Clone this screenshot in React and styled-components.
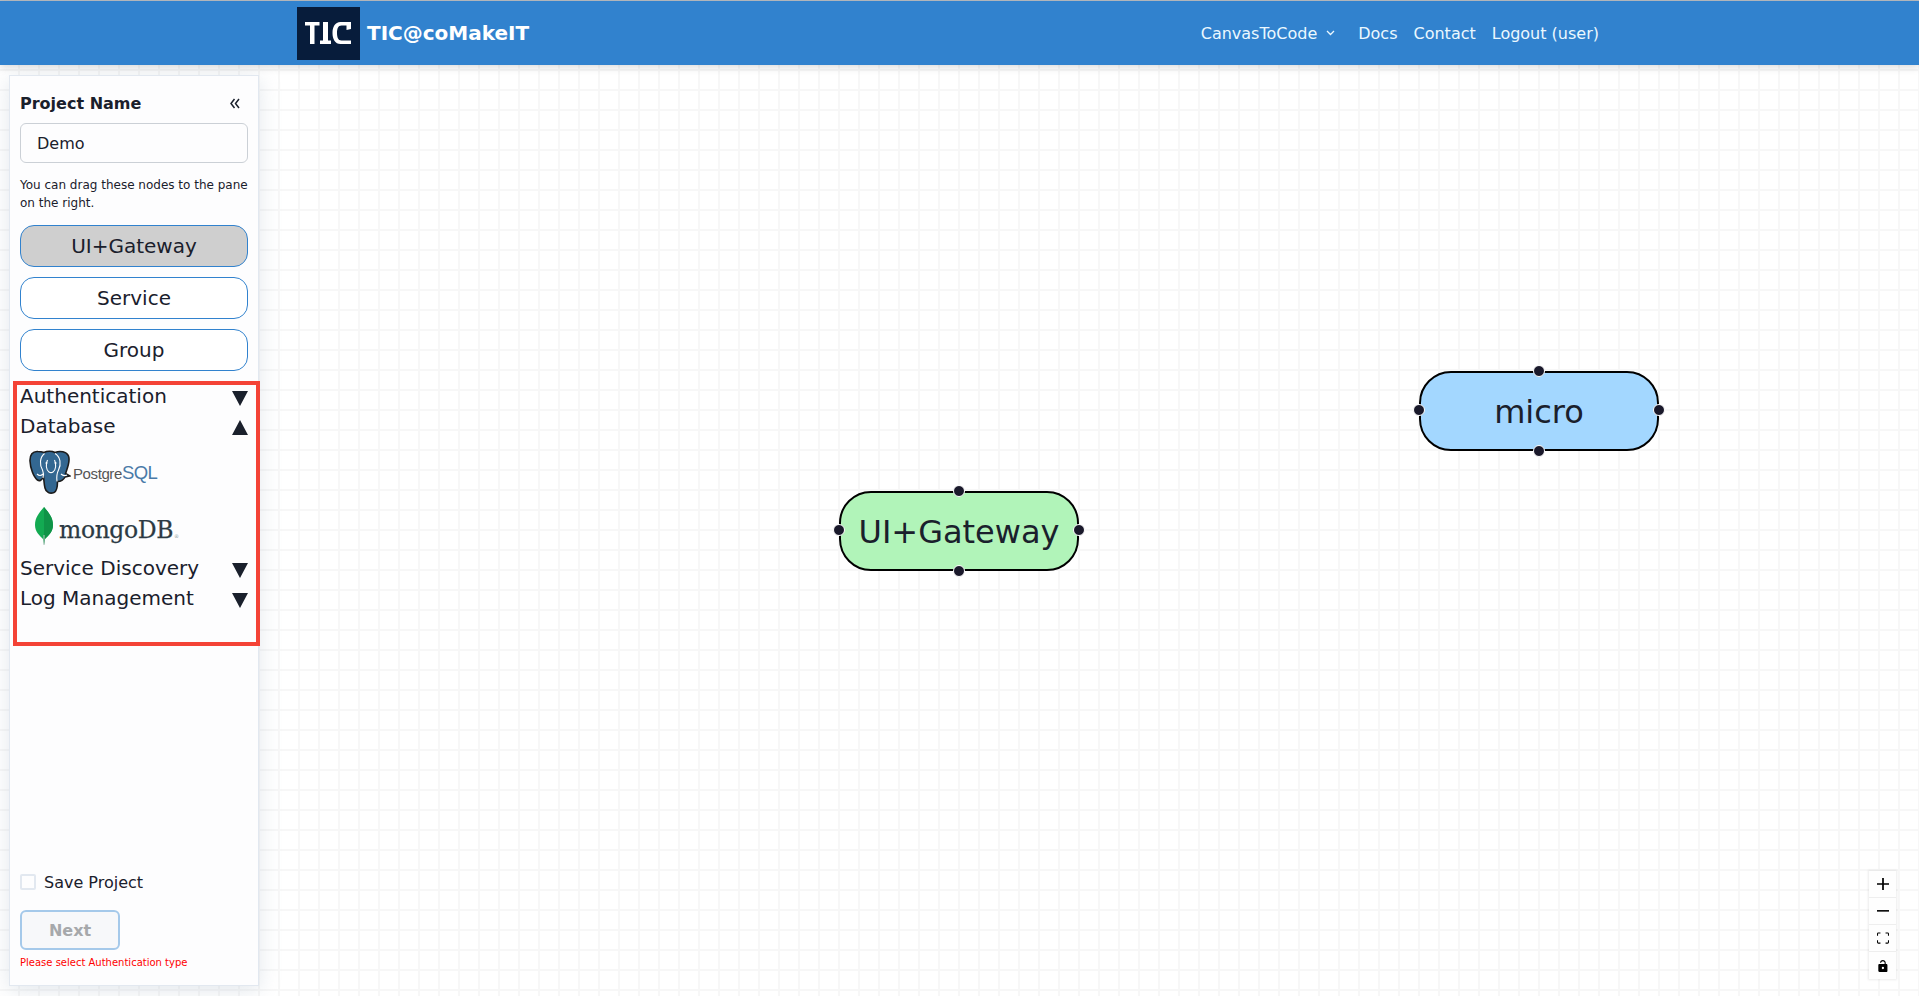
import React from "react";
import styled, { createGlobalStyle } from "styled-components";

const Global = createGlobalStyle`
  html, body { margin: 0; padding: 0; height: 100%; overflow: hidden; background: #fff; }
  body { font-family: "DejaVu Sans", sans-serif; color: #1a202c; }
  * { box-sizing: border-box; }
`;

const Page = styled.div`
  width: 1919px;
  height: 996px;
  display: flex;
  flex-direction: column;
  border-top: 1px solid #b9bdc2;
`;

const Header = styled.header`
  height: 64px;
  flex: none;
  background: #3182ce;
  display: flex;
  align-items: center;
  padding: 0 320px 0 297px;
  box-shadow: 0 2px 8px rgba(0, 0, 0, 0.15);
  position: relative;
  z-index: 2;
  color: #ebf8ff;
`;

const Brand = styled.div`
  display: flex;
  align-items: center;
  gap: 7px;
  color: #fff;
  font-weight: 700;
  font-size: 20px;
`;

const LogoBox = styled.svg`
  width: 63px;
  height: 53px;
  display: block;
`;

const Nav = styled.nav`
  margin-left: auto;
  display: flex;
  align-items: center;
  gap: 16px;
  font-size: 16px;
`;

const NavMenu = styled.span`
  display: inline-flex;
  align-items: center;
  gap: 9px;
  margin-right: 7px;
`;

const Main = styled.main`
  flex: 1;
  position: relative;
  padding: 10px 0 10px 9px;
  display: flex;
  background-color: #fff;
  background-image:
    linear-gradient(to right, #f7f7f7 2px, transparent 2px),
    linear-gradient(to bottom, #f7f7f7 2px, transparent 2px);
  background-size: 20px 20px;
  background-position: 18px 4px;
`;

const Sidebar = styled.aside`
  width: 250px;
  background: #fdfdfe;
  border: 1px solid #e2e8f0;
  box-shadow: 0 4px 20px rgba(160, 174, 192, 0.3);
  padding: 15px 10px 15px;
  display: flex;
  flex-direction: column;
  position: relative;
  z-index: 1;
`;

const TitleRow = styled.div`
  display: flex;
  align-items: center;
  justify-content: space-between;
  height: 24px;
  font-weight: 700;
  font-size: 16px;
  margin-bottom: 8px;
`;

const Collapse = styled.span`
  display: flex;
  margin-right: 8px;
`;

const NameInput = styled.input`
  width: 100%;
  height: 40px;
  border: 1px solid #cbd0d6;
  border-radius: 6px;
  padding: 0 16px;
  font: inherit;
  font-size: 16px;
  color: #1a202c;
  background: #fdfdfe;
  outline: none;
  display: block;
`;

const Hint = styled.p`
  margin: 13px 0 0;
  font-size: 12px;
  line-height: 18px;
  color: #1a202c;
`;

const NodeList = styled.div`
  display: flex;
  flex-direction: column;
  gap: 10px;
  margin-top: 13px;
`;

const PaletteNode = styled.div`
  height: 42px;
  border: 1px solid #3182ce;
  border-radius: 14px;
  background: ${(p) => (p.$active ? "#cfcfcf" : "#fff")};
  display: flex;
  align-items: center;
  justify-content: center;
  font-size: 20px;
`;

const Options = styled.section`
  margin: 10px -12px 0 -7px;
  height: 265px;
  border: 4px solid #f44336;
  padding: 0 8px 0 3px;
`;

const OptionRow = styled.div`
  height: 30px;
  display: flex;
  align-items: flex-start;
  justify-content: space-between;
  font-size: 20px;
  line-height: 22px;
`;

const Arrow = styled.svg`
  width: 16px;
  height: 16px;
  fill: #1a202c;
  flex: none;
  margin-top: 5px;
`;

const LogoRow = styled.div`
  height: ${(p) => p.$h}px;
  display: flex;
  align-items: center;
  padding-left: ${(p) => p.$pad}px;
`;

const PgWord = styled.span`
  font-family: "Liberation Sans", sans-serif;
  font-size: 15px;
  letter-spacing: -0.4px;
  color: #555;
  margin-left: 2px;
  margin-top: 2px;
  font-weight: 400;
  b { font-weight: 400; font-size: 18.5px; letter-spacing: -0.6px; color: #4a7aa8; }
`;

const LeafIcon = styled.svg`
  width: 18px;
  height: 38px;
  margin-top: -4px;
  flex: none;
`;

const MongoWord = styled.span`
  font-family: "DejaVu Serif", serif;
  font-size: 23.5px;
  letter-spacing: -0.4px;
  color: #2c3a44;
  margin-left: 6px;
  margin-top: 4px;
  -webkit-text-stroke: 0.25px #2c3a44;
  sup { font-size: 5px; color: #89979b; vertical-align: baseline; margin-left: 1px; -webkit-text-stroke: 0; }
`;

const Footer = styled.div`
  margin-top: auto;
`;

const SaveRow = styled.label`
  display: flex;
  align-items: center;
  gap: 8px;
  font-size: 16px;
  height: 24px;
  margin-bottom: 16px;
`;

const Check = styled.span`
  width: 16px;
  height: 16px;
  border: 2px solid #e2e8f0;
  border-radius: 2px;
  background: #fdfdfe;
`;

const NextButton = styled.button`
  width: 100px;
  height: 40px;
  border: 2px solid #a5c9ea;
  border-radius: 6px;
  background: #f7f8fa;
  color: #a6a8ab;
  font: inherit;
  font-weight: 700;
  font-size: 16px;
  display: block;
`;

const ErrorText = styled.div`
  margin-top: 5px;
  height: 15px;
  font-size: 10px;
  line-height: 15px;
  color: #ff0000;
`;

const FlowNode = styled.div`
  position: absolute;
  left: ${(p) => p.$x}px;
  top: ${(p) => p.$y}px;
  width: 240px;
  height: 80px;
  border: 2px solid #000;
  border-radius: 32px;
  background: ${(p) => p.$bg};
  display: flex;
  align-items: center;
  justify-content: center;
  font-size: 32px;
  padding-top: 2px;
`;

const Handle = styled.span`
  position: absolute;
  width: 12px;
  height: 12px;
  border-radius: 50%;
  background: #1a192b;
  border: 1.5px solid #fff;
  ${(p) => p.$side === "top" && "top: -8px; left: 50%; margin-left: -6px;"}
  ${(p) => p.$side === "bottom" && "bottom: -8px; left: 50%; margin-left: -6px;"}
  ${(p) => p.$side === "left" && "left: -8px; top: 50%; margin-top: -7px;"}
  ${(p) => p.$side === "right" && "right: -8px; top: 50%; margin-top: -7px;"}
`;

const Controls = styled.div`
  position: absolute;
  right: 23px;
  bottom: 17px;
  display: flex;
  flex-direction: column;
  box-shadow: 0 0 2px 1px rgba(0, 0, 0, 0.08);
`;

const ControlButton = styled.div`
  width: 27px;
  height: 27px;
  background: #fefefe;
  border-bottom: 1px solid #eee;
  display: flex;
  align-items: center;
  justify-content: center;
  &:last-child { border-bottom: none; }
  svg { width: 12px; height: 12px; fill: #000; display: block; }
`;

const ElephantLogo = () => (
  <svg width="42" height="44" viewBox="0 0 42 44" aria-hidden="true">
    <path
      d="M9 1.5 C3.5 1 0.8 5 1 11 C1.3 18 4.5 27 8.5 30 C10.5 31.5 13 30 14.5 27 C15 30 15 34 16 38 C17 42.5 21 44 25 42.5 C28.5 41 28.5 36 28.5 31.5 C31.5 31.5 34.5 30 36 27 L41 26 L36.5 23.5 C38.5 18 41.5 11 39.5 6 C37.5 1.5 31 0.5 26 2.5 C23 1 18 1 15 2.5 C13.5 2 11 1.5 9 1.5 Z"
      fill="#336791"
      stroke="#1c1c1c"
      strokeWidth="1.6"
    />
    <path
      d="M15.5 3.5 C10.5 7.5 10.5 15 13.5 20 C15 23 14.5 26 14 28 M26 3.5 C31.5 7 32.5 14 29.5 20 C27.5 24 27.5 28 28 31.5 M18.5 10 C16.5 14 17 20 20 22 C21.5 23 22.5 23 24 22 C27 20 27.5 14 25.5 10 M8 24 C10 26 12 26 14 24 M32 24 C34 26 36 26 38 25"
      fill="none"
      stroke="#fff"
      strokeWidth="1.1"
    />
    <circle cx="17.5" cy="13" r="1" fill="#fff" />
    <circle cx="26.5" cy="13" r="1" fill="#fff" />
  </svg>
);

const Leaf = () => (
  <LeafIcon viewBox="0 0 18 38" aria-hidden="true">
    <path d="M9 0 C5 5 0 10 0 18 C0 25 5 29 8 32 L9 38 L10 32 C13 29 18 25 18 18 C18 10 13 5 9 0 Z" fill="#13aa52" />
    <path d="M9 0 C13 5 18 10 18 18 C18 25 13 29 10 32 L9 38 Z" fill="#0f9347" />
    <path d="M9 28 L9 38" stroke="#b8c4c2" strokeWidth="1" />
  </LeafIcon>
);

const DownArrow = () => (
  <Arrow viewBox="0 0 16 16"><path d="M0 1 H16 L8 16 Z" /></Arrow>
);
const UpArrow = () => (
  <Arrow viewBox="0 0 16 16"><path d="M8 0 L16 15 H0 Z" /></Arrow>
);

const handles = ["top", "bottom", "left", "right"];

export default function App() {
  return (
    <Page>
      <Global />
      <Header>
        <Brand>
          <LogoBox viewBox="0 0 63 53" aria-label="TIC logo">
            <rect width="63" height="53" fill="#071c3b" />
            <path
              d="M8 15 H22.5 V18.5 H17.5 V37 H13 V18.5 H8 Z M26 15 H31 V33.5 H34 V37 H23 V33.5 H26 Z M54 15 H43.5 C38 15 35.5 20 35.5 26 C35.5 32 38 37 43.5 37 H54 V33.5 H44.5 C41 33.5 40 30 40 26 C40 22 41 18.5 44.5 18.5 H49.5 V23 L54 22 Z"
              fill="#fff"
            />
          </LogoBox>
          TIC@coMakeIT
        </Brand>
        <Nav>
          <NavMenu>
            CanvasToCode
            <svg width="9" height="6" viewBox="0 0 9 6" fill="none" stroke="#ebf8ff" strokeWidth="1.3">
              <path d="M1 1 L4.5 4.5 L8 1" />
            </svg>
          </NavMenu>
          <span>Docs</span>
          <span>Contact</span>
          <span>Logout (user)</span>
        </Nav>
      </Header>
      <Main>
        <Sidebar>
          <TitleRow>
            Project Name
            <Collapse>
              <svg width="10" height="11" viewBox="0 0 10 11" fill="none" stroke="#1a202c" strokeWidth="1.5">
                <path d="M4.5 1 L1 5.5 L4.5 10 M9 1 L5.5 5.5 L9 10" />
              </svg>
            </Collapse>
          </TitleRow>
          <NameInput defaultValue="Demo" />
          <Hint>You can drag these nodes to the pane on the right.</Hint>
          <NodeList>
            <PaletteNode $active>UI+Gateway</PaletteNode>
            <PaletteNode>Service</PaletteNode>
            <PaletteNode>Group</PaletteNode>
          </NodeList>
          <Options>
            <OptionRow>Authentication<DownArrow /></OptionRow>
            <OptionRow>Database<UpArrow /></OptionRow>
            <LogoRow $h={54} $pad={9}>
              <ElephantLogo />
              <PgWord>Postgre<b>SQL</b></PgWord>
            </LogoRow>
            <LogoRow $h={58} $pad={15}>
              <Leaf />
              <MongoWord>mongoDB<sup>®</sup></MongoWord>
            </LogoRow>
            <OptionRow>Service Discovery<DownArrow /></OptionRow>
            <OptionRow>Log Management<DownArrow /></OptionRow>
          </Options>
          <Footer>
            <SaveRow><Check />Save Project</SaveRow>
            <NextButton disabled>Next</NextButton>
            <ErrorText>Please select Authentication type</ErrorText>
          </Footer>
        </Sidebar>
        <FlowNode $x={839} $y={426} $bg="#b1f4b9">
          UI+Gateway
          {handles.map((s) => <Handle key={s} $side={s} />)}
        </FlowNode>
        <FlowNode $x={1419} $y={306} $bg="#a3d7ff">
          micro
          {handles.map((s) => <Handle key={s} $side={s} />)}
        </FlowNode>
        <Controls>
          <ControlButton>
            <svg viewBox="0 0 32 32"><path d="M32 18.3H18.3V32h-4.6V18.3H0v-4.6h13.7V0h4.6v13.7H32z" /></svg>
          </ControlButton>
          <ControlButton>
            <svg viewBox="0 0 32 5"><path d="M0 0h32v4.2H0z" /></svg>
          </ControlButton>
          <ControlButton>
            <svg viewBox="0 0 32 30"><path d="M3.7 27.2a.9.9 0 01-.9-.9v-5H0v5a3.7 3.7 0 003.7 3.7h5.5v-2.8H3.7zM28.3 0h-5.5v2.8h5.5c.5 0 .9.4.9.9v5H32v-5A3.7 3.7 0 0028.3 0zM0 3.7v5h2.8v-5c0-.5.4-.9.9-.9h5.5V0H3.7A3.7 3.7 0 000 3.7zM29.2 26.3c0 .5-.4.9-.9.9h-5.5V30h5.5a3.7 3.7 0 003.7-3.7v-5h-2.8v5z" /></svg>
          </ControlButton>
          <ControlButton>
            <svg viewBox="0 0 25 32"><path d="M21.3 10.7h-1.5V7.6C19.8 3.4 16.4 0 12.2 0 8 0 4.6 3.4 4.6 7.6h3C7.6 5 9.6 3 12.2 3s4.6 2 4.6 4.6v3.1H3c-1.7 0-3 1.4-3 3v15.2c0 1.7 1.3 3.1 3 3.1h18.3c1.7 0 3-1.4 3-3V13.7c0-1.6-1.3-3-3-3zM12.2 24.4a3 3 0 110-6.1 3 3 0 010 6.1z" /></svg>
          </ControlButton>
        </Controls>
      </Main>
    </Page>
  );
}
